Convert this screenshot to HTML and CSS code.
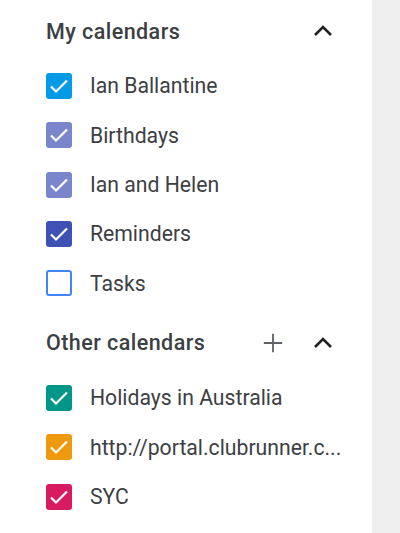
FILE: index.html
```html
<!DOCTYPE html>
<html>
<head>
<meta charset="utf-8">
<link rel="stylesheet" href="styles.css">
</head>
<body>
<div class="page">
  <aside class="sidebar">
    <section class="group">
      <div class="group-head">
        <span class="group-title">My calendars</span>
        <div class="head-actions">
          <svg class="icon chevron" width="24" height="24" viewBox="0 0 24 24"><polyline points="4,16 12,8 20,16"/></svg>
        </div>
      </div>
      <ul class="cal-list">
        <li class="cal"><span class="box" style="--c:#039be5"><svg viewBox="0 0 26 26"><polyline points="5,13.5 10,18.5 21,7.5"/></svg></span><span class="label">Ian Ballantine</span></li>
        <li class="cal"><span class="box" style="--c:#7986cb"><svg viewBox="0 0 26 26"><polyline points="5,13.5 10,18.5 21,7.5"/></svg></span><span class="label">Birthdays</span></li>
        <li class="cal"><span class="box" style="--c:#7986cb"><svg viewBox="0 0 26 26"><polyline points="5,13.5 10,18.5 21,7.5"/></svg></span><span class="label">Ian and Helen</span></li>
        <li class="cal"><span class="box" style="--c:#3f51b5"><svg viewBox="0 0 26 26"><polyline points="5,13.5 10,18.5 21,7.5"/></svg></span><span class="label">Reminders</span></li>
        <li class="cal"><span class="box empty" style="--c:#4285f4"></span><span class="label">Tasks</span></li>
      </ul>
    </section>
    <section class="group other">
      <div class="group-head">
        <span class="group-title">Other calendars</span>
        <div class="head-actions">
          <svg class="icon plus" width="24" height="24" viewBox="0 0 24 24"><path d="M12 2v20M2 12h20"/></svg>
          <svg class="icon chevron" width="24" height="24" viewBox="0 0 24 24"><polyline points="4,16 12,8 20,16"/></svg>
        </div>
      </div>
      <ul class="cal-list">
        <li class="cal"><span class="box" style="--c:#009688"><svg viewBox="0 0 26 26"><polyline points="5,13.5 10,18.5 21,7.5"/></svg></span><span class="label">Holidays in Australia</span></li>
        <li class="cal"><span class="box" style="--c:#ef9a0e"><svg viewBox="0 0 26 26"><polyline points="5,13.5 10,18.5 21,7.5"/></svg></span><span class="label">http://portal.clubrunner.c...</span></li>
        <li class="cal"><span class="box" style="--c:#d81b60"><svg viewBox="0 0 26 26"><polyline points="5,13.5 10,18.5 21,7.5"/></svg></span><span class="label">SYC</span></li>
      </ul>
    </section>
  </aside>
  <div class="main"></div>
</div>
</body>
</html>
```
FILE: styles.css
```css
html, body {
  margin: 0;
  padding: 0;
  height: 100%;
}
body {
  font-family: Roboto, "Liberation Sans", Arial, sans-serif;
  color: #3c4043;
  background: #fff;
}
.page {
  display: flex;
  height: 533px;
}
.sidebar {
  width: 372px;
  flex: none;
  background: #fff;
  padding-top: 6px;
  box-sizing: border-box;
}
.main {
  flex: 1;
  background: #efefef;
}
.group-head {
  display: flex;
  align-items: center;
  height: 50px;
  padding-left: 46px;
  padding-right: 37px;
}
.group-title {
  flex: 1;
  font-size: 21.5px;
  font-weight: 500;
  letter-spacing: 0.45px;
  color: #3c4043;
}
.head-actions {
  display: flex;
  align-items: center;
  gap: 27px;
}
.icon {
  display: block;
  fill: none;
}
.chevron {
  stroke: #202124;
  stroke-width: 2.6;
}
.plus {
  width: 22px;
  height: 22px;
  stroke: #5f6368;
  stroke-width: 2;
}
.cal-list {
  list-style: none;
  margin: 5.3px 0 0;
  padding: 0;
}
.cal {
  display: flex;
  align-items: center;
  height: 49.33px;
  padding-left: 46px;
  gap: 18px;
}
.box {
  width: 26px;
  height: 26px;
  flex: none;
  box-sizing: border-box;
  border-radius: 3px;
  background: var(--c);
  display: flex;
}
.box svg {
  width: 26px;
  height: 26px;
  fill: none;
  stroke: #fff;
  stroke-width: 2.2;
}
.box.empty {
  background: #fff;
  border: 2.5px solid var(--c);
}
.label {
  font-size: 21.2px;
  color: #3c4043;
  white-space: nowrap;
  overflow: hidden;
  text-overflow: ellipsis;
  max-width: 260px;
}
.other {
  margin-top: 10px;
}
```
